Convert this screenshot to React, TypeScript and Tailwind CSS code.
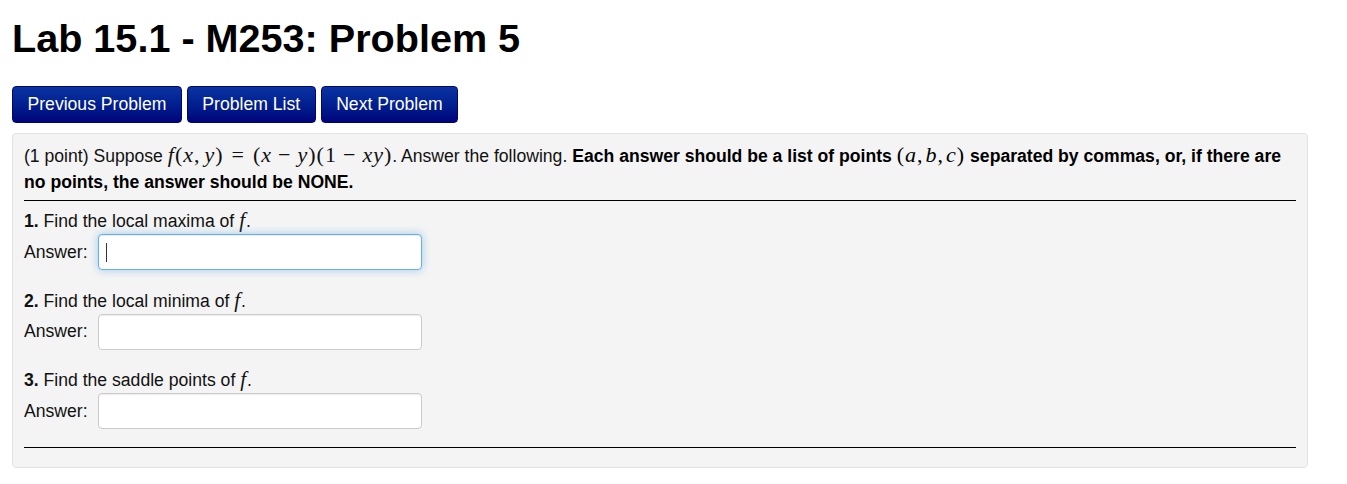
import type { ReactNode } from "react";

const sans = "font-['Liberation_Sans',Arial,sans-serif]";

function M({
  children,
  small = false,
}: {
  children: ReactNode;
  small?: boolean;
}) {
  return (
    <span
      className={`font-['Liberation_Serif','Times_New_Roman',serif] leading-none tracking-[1px] whitespace-nowrap ${
        small ? "text-[21px]" : "text-[22px]"
      }`}
    >
      {children}
    </span>
  );
}

function V({ children }: { children: ReactNode }) {
  return <i className="italic">{children}</i>;
}

function Op({ children }: { children: ReactNode }) {
  return <span className="mx-[6px]">{children}</span>;
}

function AnswerRow({
  focused = false,
}: {
  focused?: boolean;
}) {
  return (
    <div className="mt-[2px] flex items-center gap-[10px]">
      <span>Answer:</span>
      <div className="relative">
        <input
          type="text"
          aria-label="Answer"
          className={`h-[36px] w-[324px] rounded-[4px] border bg-white px-[8px] outline-none ${
            focused
              ? "border-[#66afe9] shadow-[inset_0_1px_1px_rgba(0,0,0,0.075),0_0_8px_rgba(102,175,233,0.6)]"
              : "border-[#cccccc] shadow-[inset_0_1px_1px_rgba(0,0,0,0.075)]"
          }`}
        />
        {focused && (
          <span className="pointer-events-none absolute left-[8px] top-[9px] h-[19px] w-px bg-[#333]" />
        )}
      </div>
    </div>
  );
}

function Question({
  num,
  text,
  focused = false,
  first = false,
}: {
  num: number;
  text: string;
  focused?: boolean;
  first?: boolean;
}) {
  return (
    <div className={first ? "mt-[9px]" : "mt-[19.5px]"}>
      <p className="leading-[22px]">
        <b>{num}.</b> {text}{" "}
        <M small>
          <V>f</V>
        </M>
        .
      </p>
      <AnswerRow focused={focused} />
    </div>
  );
}

export default function App() {
  return (
    <div className={`${sans} min-h-[484px] bg-white px-[12px] text-[17.6px] text-[#111]`}>
      <h1 className="pt-[16px] text-[39.6px] font-bold leading-[44px] text-black">
        Lab 15.1 - M253: Problem 5
      </h1>

      <nav className="mt-[26px] flex gap-[5px]">
        {["Previous Problem", "Problem List", "Next Problem"].map((label) => (
          <button
            key={label}
            type="button"
            className="h-[37px] rounded-[4px] border border-[#00066e] bg-gradient-to-b from-[#0c33a3] to-[#00037c] px-[14.5px] text-[17.6px] text-white"
          >
            {label}
          </button>
        ))}
      </nav>

      <section className="mt-[10px] w-[1296px] rounded-[4px] border border-[#e3e3e3] bg-[#f4f4f4] px-[11px] pb-[19px] pt-[9px]">
        <p className="leading-[26px]">
          (1 point) Suppose{" "}
          <M>
            <V>f</V>(<V>x</V>,<span className="ml-[4px]" />
            <V>y</V>)<span className="mx-[8px]">=</span>(<V>x</V>
            <Op>−</Op>
            <V>y</V>)(1<Op>−</Op>
            <V>xy</V>)
          </M>
          . Answer the following.{" "}
          <b className="text-black">
            Each answer should be a list of points{" "}
            <span className="font-normal">
              <M>
                (<V>a</V>,<span className="ml-[2px]" />
                <V>b</V>,<span className="ml-[2px]" />
                <V>c</V>)
              </M>
            </span>{" "}
            separated by commas, or, if there are no points, the answer should be NONE.
          </b>
        </p>

        <hr className="mt-[5px] border-t border-black" />

        <Question num={1} text="Find the local maxima of" focused first />
        <Question num={2} text="Find the local minima of" />
        <Question num={3} text="Find the saddle points of" />

        <hr className="mt-[18px] border-t border-black" />
      </section>
    </div>
  );
}
